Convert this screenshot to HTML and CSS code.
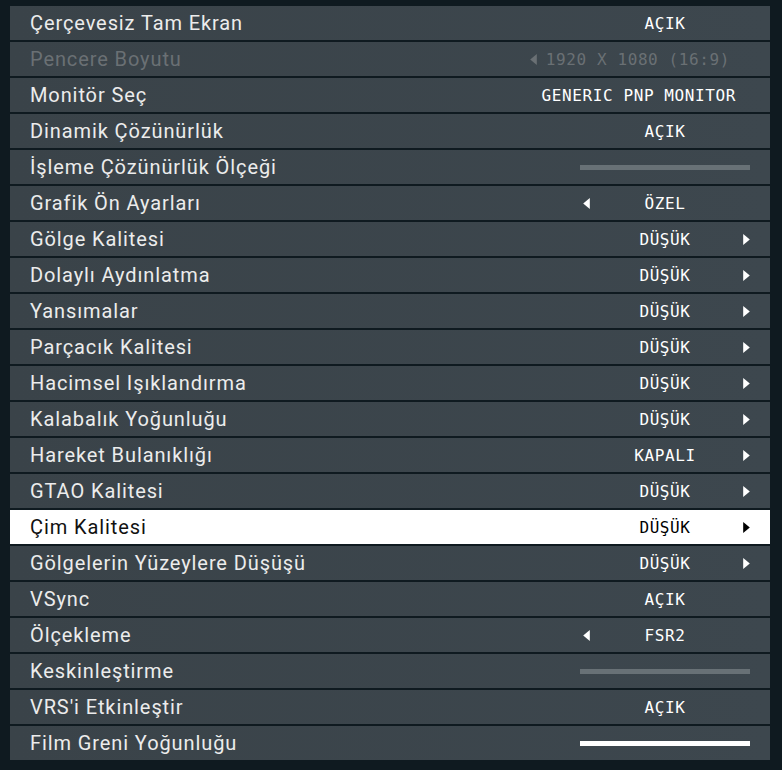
FILE: index.html
```html
<!DOCTYPE html>
<html lang="tr">
<head>
<meta charset="utf-8">
<title>Grafik Ayarları</title>
<link rel="stylesheet" href="styles.css">
</head>
<body>
<div class="list">
  <div class="row"><span class="label">Çerçevesiz Tam Ekran</span><div class="value"><span class="slot"></span><span class="text">AÇIK</span><span class="slot"></span></div></div>
  <div class="row disabled"><span class="label">Pencere Boyutu</span><div class="value right res"><svg class="arrow" viewBox="0 0 6 10"><polygon points="6,0 6,10 0,5"/></svg><span class="text">1920 X 1080 (16:9)</span></div></div>
  <div class="row"><span class="label">Monitör Seç</span><div class="value right mon"><span class="text">GENERIC PNP MONITOR</span></div></div>
  <div class="row"><span class="label">Dinamik Çözünürlük</span><div class="value"><span class="slot"></span><span class="text">AÇIK</span><span class="slot"></span></div></div>
  <div class="row"><span class="label">İşleme Çözünürlük Ölçeği</span><div class="value"><span class="slider"></span></div></div>
  <div class="row"><span class="label">Grafik Ön Ayarları</span><div class="value"><span class="slot l"><svg class="arrow" viewBox="0 0 6 10"><polygon points="6,0 6,10 0,5"/></svg></span><span class="text">ÖZEL</span><span class="slot"></span></div></div>
  <div class="row"><span class="label">Gölge Kalitesi</span><div class="value"><span class="slot"></span><span class="text">DÜŞÜK</span><span class="slot r"><svg class="arrow" viewBox="0 0 6 10"><polygon points="0,0 6,5 0,10"/></svg></span></div></div>
  <div class="row"><span class="label">Dolaylı Aydınlatma</span><div class="value"><span class="slot"></span><span class="text">DÜŞÜK</span><span class="slot r"><svg class="arrow" viewBox="0 0 6 10"><polygon points="0,0 6,5 0,10"/></svg></span></div></div>
  <div class="row"><span class="label">Yansımalar</span><div class="value"><span class="slot"></span><span class="text">DÜŞÜK</span><span class="slot r"><svg class="arrow" viewBox="0 0 6 10"><polygon points="0,0 6,5 0,10"/></svg></span></div></div>
  <div class="row"><span class="label">Parçacık Kalitesi</span><div class="value"><span class="slot"></span><span class="text">DÜŞÜK</span><span class="slot r"><svg class="arrow" viewBox="0 0 6 10"><polygon points="0,0 6,5 0,10"/></svg></span></div></div>
  <div class="row"><span class="label">Hacimsel Işıklandırma</span><div class="value"><span class="slot"></span><span class="text">DÜŞÜK</span><span class="slot r"><svg class="arrow" viewBox="0 0 6 10"><polygon points="0,0 6,5 0,10"/></svg></span></div></div>
  <div class="row"><span class="label">Kalabalık Yoğunluğu</span><div class="value"><span class="slot"></span><span class="text">DÜŞÜK</span><span class="slot r"><svg class="arrow" viewBox="0 0 6 10"><polygon points="0,0 6,5 0,10"/></svg></span></div></div>
  <div class="row"><span class="label">Hareket Bulanıklığı</span><div class="value"><span class="slot"></span><span class="text">KAPALI</span><span class="slot r"><svg class="arrow" viewBox="0 0 6 10"><polygon points="0,0 6,5 0,10"/></svg></span></div></div>
  <div class="row"><span class="label">GTAO Kalitesi</span><div class="value"><span class="slot"></span><span class="text">DÜŞÜK</span><span class="slot r"><svg class="arrow" viewBox="0 0 6 10"><polygon points="0,0 6,5 0,10"/></svg></span></div></div>
  <div class="row active"><span class="label">Çim Kalitesi</span><div class="value"><span class="slot"></span><span class="text">DÜŞÜK</span><span class="slot r"><svg class="arrow" viewBox="0 0 6 10"><polygon points="0,0 6,5 0,10"/></svg></span></div></div>
  <div class="row"><span class="label">Gölgelerin Yüzeylere Düşüşü</span><div class="value"><span class="slot"></span><span class="text">DÜŞÜK</span><span class="slot r"><svg class="arrow" viewBox="0 0 6 10"><polygon points="0,0 6,5 0,10"/></svg></span></div></div>
  <div class="row"><span class="label">VSync</span><div class="value"><span class="slot"></span><span class="text">AÇIK</span><span class="slot"></span></div></div>
  <div class="row"><span class="label">Ölçekleme</span><div class="value"><span class="slot l"><svg class="arrow" viewBox="0 0 6 10"><polygon points="6,0 6,10 0,5"/></svg></span><span class="text">FSR2</span><span class="slot"></span></div></div>
  <div class="row"><span class="label">Keskinleştirme</span><div class="value"><span class="slider"></span></div></div>
  <div class="row"><span class="label">VRS'i Etkinleştir</span><div class="value"><span class="slot"></span><span class="text">AÇIK</span><span class="slot"></span></div></div>
  <div class="row"><span class="label">Film Greni Yoğunluğu</span><div class="value"><span class="slider full"></span></div></div>
</div>
</body>
</html>
```
FILE: styles.css
```css
html, body {
  margin: 0;
  padding: 0;
  background: #0f1a20;
}
.list {
  display: flex;
  flex-direction: column;
  gap: 2px;
  padding: 6px 12px 0 10px;
}
.row {
  height: 34px;
  display: flex;
  align-items: center;
  background: linear-gradient(90deg, #3a4349 0%, #3d474e 100%);
  padding: 0 20px;
  color: #ececec;
}
.label {
  flex: 1;
  font-family: Roboto, "Noto Sans", sans-serif;
  font-size: 20px;
  letter-spacing: 0.9px;
  white-space: nowrap;
}
.row.disabled { color: #6a7074; }
.row.active { background: #ffffff; color: #111111; }
.value {
  width: 170px;
  flex-shrink: 0;
  display: flex;
  align-items: center;
  font-family: "DejaVu Sans Mono", monospace;
  font-size: 16px;
  letter-spacing: 0.6px;
  color: #ffffff;
}
.row.disabled .value { color: #6a7074; }
.row.active .value { color: #000000; }
.value .text {
  flex: 1;
  text-align: center;
  white-space: nowrap;
}
.slot {
  width: 10px;
  flex-shrink: 0;
  display: flex;
}
.slot.l { justify-content: flex-start; padding-left: 3px; width: 7px; }
.slot.r { justify-content: flex-end; padding-right: 0; width: 10px; }
.arrow {
  display: block;
  flex-shrink: 0;
  width: 7px;
  height: 11px;
  fill: currentColor;
}
.value.right { justify-content: flex-end; gap: 9px; }
.value.right .text { flex: none; }
.value.res { padding-right: 20px; width: 150px; }
.value.mon { padding-right: 14px; width: 156px; }
.slider {
  width: 170px;
  height: 5px;
  background: #687176;
}
.slider.full { background: #ffffff; }
```
